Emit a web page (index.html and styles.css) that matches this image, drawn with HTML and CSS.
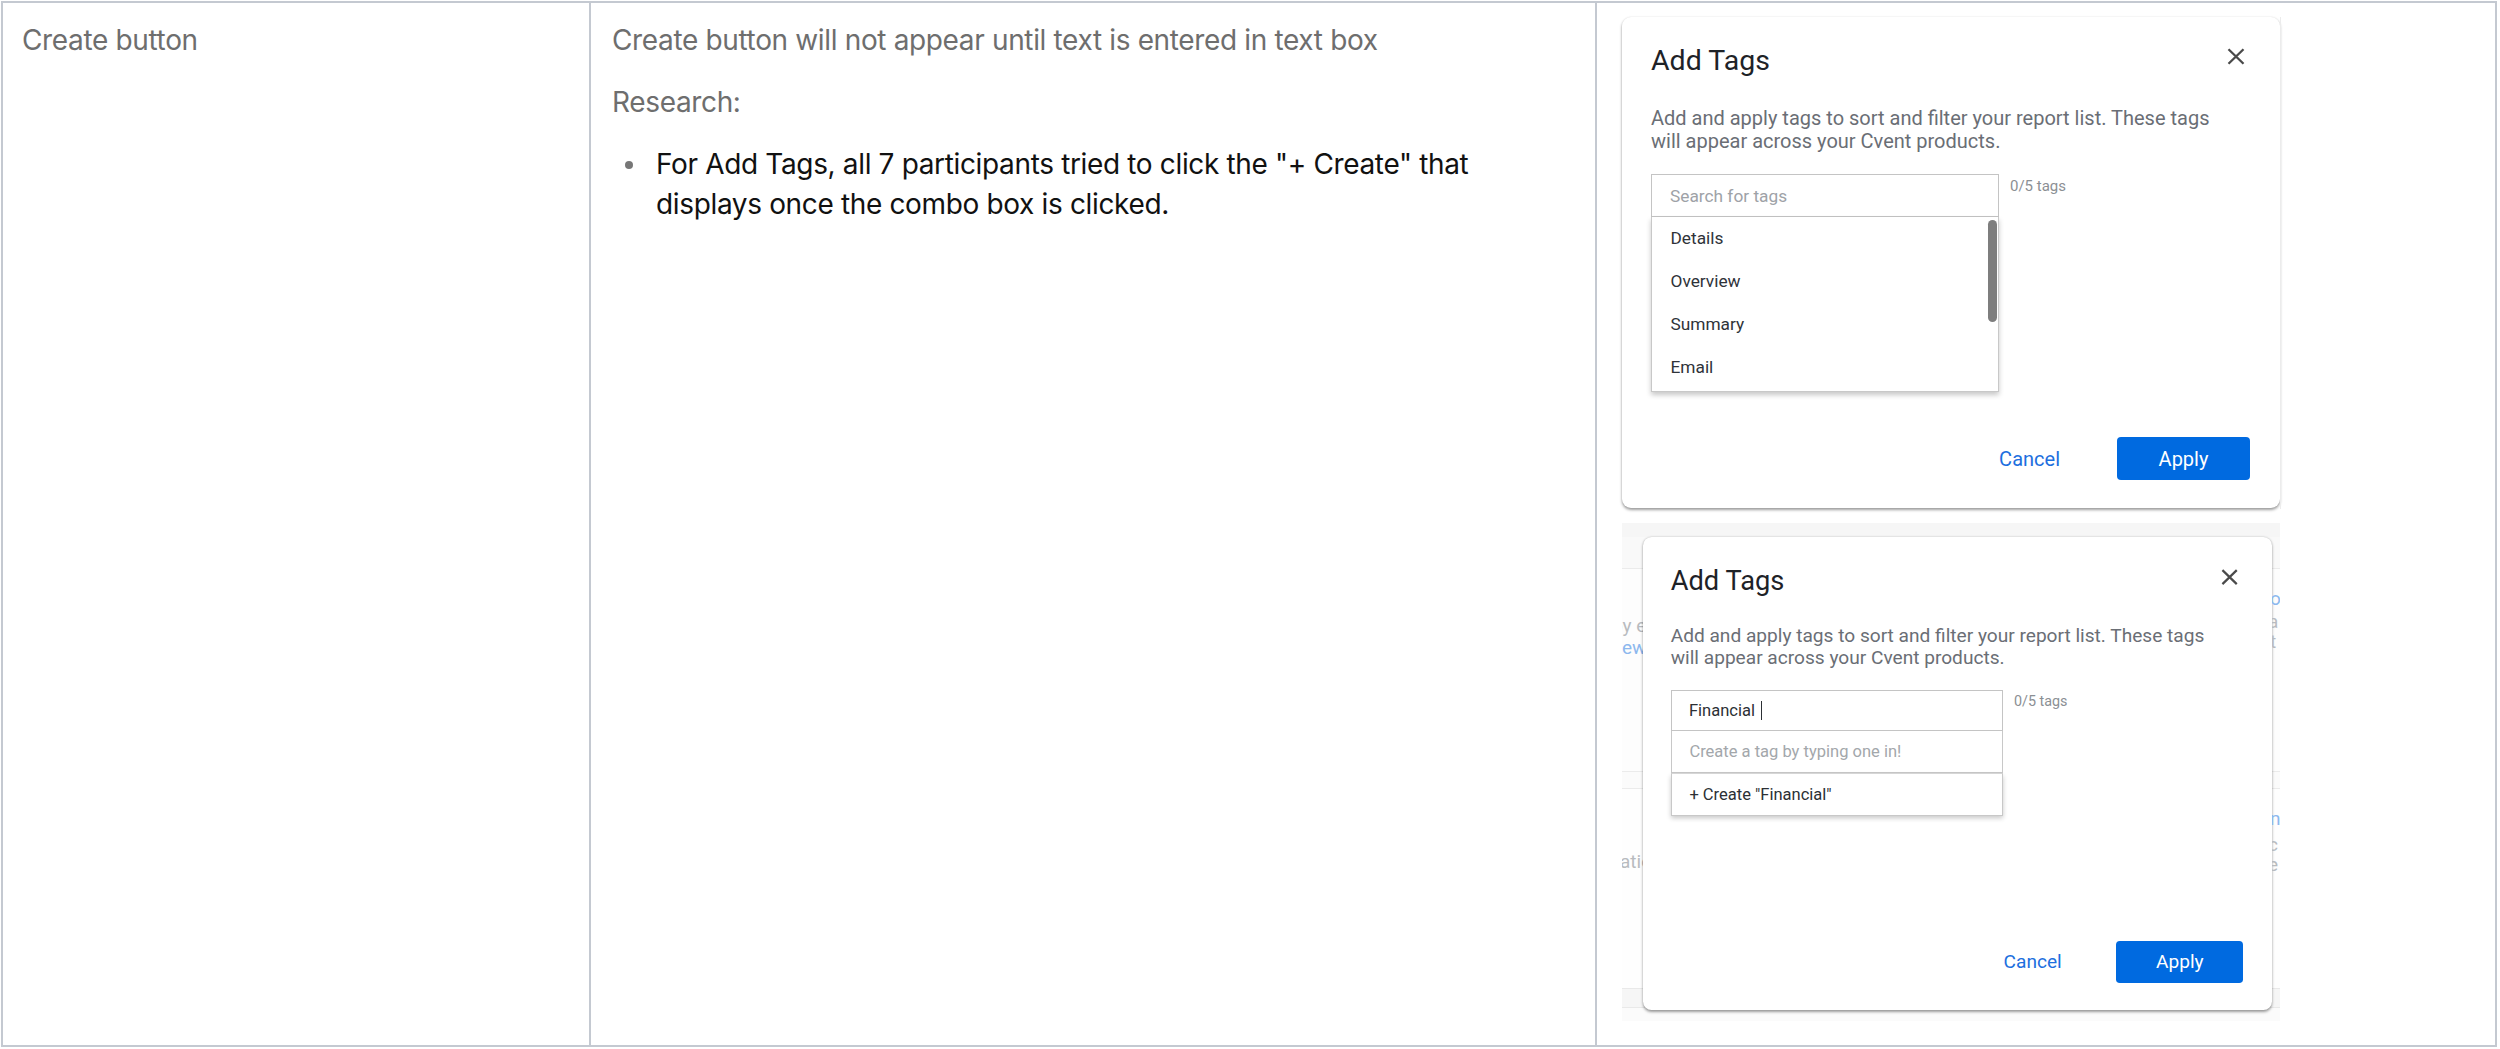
FILE: index.html
```html
<!DOCTYPE html>
<html lang="en">
<head>
<meta charset="utf-8">
<title>Create button</title>
<link rel="stylesheet" href="styles.css">
</head>
<body>
<div class="table">
  <div class="cell c1">
    <p class="para muted">Create button</p>
  </div>
  <div class="cell c2">
    <p class="para muted">Create button will not appear until text is entered in text box</p>
    <p class="para muted">Research:</p>
    <ul class="bullets">
      <li>For Add Tags, all 7 participants tried to click the "+ Create" that displays once the combo box is clicked.</li>
    </ul>
  </div>
  <div class="cell c3">
    <div class="shot shot1">
      <div class="dialog">
        <div class="dlg-head">
          <div class="dlg-title">Add Tags</div>
          <svg class="close" viewBox="0 0 18 17" width="18" height="17"><path d="M1.5 1.2 L16.5 15.8 M16.5 1.2 L1.5 15.8" stroke="#4a4a4a" stroke-width="2.3" fill="none"/></svg>
        </div>
        <div class="dlg-desc">Add and apply tags to sort and filter your report list. These tags<br>will appear across your Cvent products.</div>
        <div class="field-row">
          <div class="combo">
            <div class="input placeholder">Search for tags</div>
            <div class="list">
              <div class="item">Details</div>
              <div class="item">Overview</div>
              <div class="item">Summary</div>
              <div class="item">Email</div>
              <div class="scroll"></div>
            </div>
          </div>
          <div class="count">0/5 tags</div>
        </div>
        <div class="dlg-foot">
          <span class="cancel">Cancel</span>
          <span class="apply">Apply</span>
        </div>
      </div>
      <div class="edge-r"></div>
    </div>
    <div class="shot shot2">
      <div class="strip strip-l">
        <span class="ghost g1">by e</span>
        <span class="ghost g2 blue">ew</span>
        <span class="ghost g3">atio</span>
      </div>
      <div class="dialog small">
        <div class="dlg-head">
          <div class="dlg-title">Add Tags</div>
          <svg class="close" viewBox="0 0 18 17" width="18" height="17"><path d="M1.5 1.2 L16.5 15.8 M16.5 1.2 L1.5 15.8" stroke="#4a4a4a" stroke-width="2.3" fill="none"/></svg>
        </div>
        <div class="dlg-desc">Add and apply tags to sort and filter your report list. These tags<br>will appear across your Cvent products.</div>
        <div class="field-row">
          <div class="combo">
            <div class="input typed">Financial<span class="caret"></span></div>
            <div class="row hint">Create a tag by typing one in!</div>
            <div class="row create">+ Create "Financial"</div>
          </div>
          <div class="count">0/5 tags</div>
        </div>
        <div class="dlg-foot">
          <span class="cancel">Cancel</span>
          <span class="apply">Apply</span>
        </div>
      </div>
      <div class="strip strip-r">
        <span class="ghost r1 blue">o</span>
        <span class="ghost r2">a</span>
        <span class="ghost r3">t</span>
        <span class="ghost r4 blue">n</span>
        <span class="ghost r5">c</span>
        <span class="ghost r6">e</span>
      </div>
    </div>
  </div>
</div>
</body>
</html>
```

FILE: styles.css
```css
html, body {
  margin: 0;
  padding: 0;
  background: #ffffff;
}

body {
  font-family: Inter, "Liberation Sans", sans-serif;
}

.table {
  margin: 1px 0 0 1px;
  width: 2496px;
  height: 1046px;
  box-sizing: border-box;
  border: 2px solid #c4c9d1;
  display: grid;
  grid-template-columns: 588px 1006px 1fr;
}

.cell {
  box-sizing: border-box;
  padding: 17px 20px 0 20px;
}

.c1 {
  padding-left: 19px;
  border-right: 2px solid #c4c9d1;
}

.c2 {
  padding-left: 21px;
  border-right: 2px solid #c4c9d1;
}

.para {
  margin: 0 0 22px;
  font-size: 28px;
  line-height: 40px;
  letter-spacing: -0.35px;
}

.muted {
  color: #6e6e6e;
}

.bullets {
  margin: 0;
  padding: 0;
  list-style: none;
}

.bullets li {
  display: flex;
  font-size: 28px;
  line-height: 40px;
  letter-spacing: -0.35px;
  color: #111111;
}

.bullets li::before {
  content: "";
  flex: none;
  width: 8px;
  height: 8px;
  border-radius: 50%;
  background: #777777;
  margin: 17px 23px 0 13px;
}

.c3 {
  padding: 12px 0 0 23px;
}

/* screenshots */
.shot {
  display: flex;
  box-sizing: border-box;
}

.shot1 {
  width: 664px;
  height: 508px;
  padding: 2px 0 0 2px;
}

.edge-r {
  width: 4px;
  height: 492px;
  border-left: 1px solid #ececec;
  box-sizing: border-box;
}

.shot2 {
  margin-left: 2px;
  width: 658px;
  height: 498px;
  padding-top: 14px;
  background: linear-gradient(to bottom,
    #f6f6f6 0, #f6f6f6 14px,
    #f9f9f9 14px, #f9f9f9 45px,
    #ebebeb 45px, #ebebeb 46px,
    #fdfdfd 46px, #fdfdfd 248px,
    #ebebeb 248px, #ebebeb 249px,
    #fbfbfb 249px, #fbfbfb 265px,
    #ebebeb 265px, #ebebeb 266px,
    #fefefe 266px, #fefefe 465px,
    #e9e9e9 465px, #e9e9e9 466px,
    #f6f6f6 466px, #f6f6f6 484px,
    #e9e9e9 484px, #e9e9e9 485px,
    #fbfbfb 485px);
}

.strip {
  display: flex;
  flex-direction: column;
  overflow: hidden;
  flex: none;
  font-family: Roboto, sans-serif;
  font-size: 19px;
  line-height: 20px;
  color: #b8bbbf;
}

.strip-l {
  width: 21px;
}

.strip-r {
  width: 8px;
}

.ghost {
  white-space: nowrap;
}

.blue {
  color: #8cb8ee;
}

.g1 { margin: 79px 0 0 -10px; }
.g2 { margin: 2px 0 0 0; }
.g3 { margin: 194px 0 0 -2px; }

.r1 { margin: 52px 0 0 -2px; }
.r2 { margin: 3px 0 0 -4px; }
.r3 { margin: 0 0 0 -2px; }
.r4 { margin: 157px 0 0 -2px; }
.r5 { margin: 6px 0 0 -4px; }
.r6 { margin: 0 0 0 -4px; }

/* dialog */
.dialog {
  flex: none;
  width: 658px;
  height: 491px;
  box-sizing: border-box;
  background: #ffffff;
  border-radius: 9px;
  box-shadow: 0 2px 3px rgba(0, 0, 0, 0.38), 0 0 2px rgba(0, 0, 0, 0.10);
  display: flex;
  flex-direction: column;
  padding: 27px 30px 28px 29px;
  font-family: Roboto, "Liberation Sans", sans-serif;
}

.dialog.small {
  zoom: 0.956;
  height: 495px;
  padding-top: 29.5px;
  padding-bottom: 29px;
}

.dlg-head {
  display: flex;
  justify-content: space-between;
  align-items: flex-start;
}

.dlg-title {
  font-size: 28.5px;
  line-height: 34px;
  color: #1e2227;
}

.close {
  margin: 4px 5px 0 0;
}

.dlg-desc {
  margin-top: 29px;
  font-size: 20px;
  line-height: 23px;
  color: #6a6e75;
  white-space: nowrap;
}

.field-row {
  display: flex;
  gap: 11px;
  margin-top: 21px;
}

.small .field-row {
  margin-top: 22px;
}

.combo {
  width: 348px;
  flex: none;
}

.input {
  height: 43px;
  box-sizing: border-box;
  border: 1.5px solid #c4c4c4;
  display: flex;
  align-items: center;
  padding-left: 18px;
  font-size: 17.3px;
}

.placeholder {
  color: #9ea2a7;
}

.typed {
  color: #2c3035;
  height: 42px;
}

.caret {
  display: inline-block;
  width: 1.5px;
  height: 20px;
  background: #2c3035;
  margin-left: 6px;
}

.list {
  position: relative;
  height: 175px;
  box-sizing: border-box;
  border: 1.5px solid #c8c8c8;
  border-top: none;
  box-shadow: 0 3px 5px rgba(0, 0, 0, 0.22);
  padding-left: 18.5px;
}

.item {
  font-size: 17.3px;
  line-height: 43px;
  color: #2f3339;
}

.scroll {
  position: absolute;
  right: 1px;
  top: 3px;
  width: 9px;
  height: 102px;
  border-radius: 5px;
  background: #7e7e7e;
}

.row {
  box-sizing: border-box;
  border: 1.5px solid #c8c8c8;
  border-top: none;
  padding-left: 18.5px;
  font-size: 17.3px;
  display: flex;
  align-items: center;
}

.hint {
  height: 44px;
  color: #a3a7ab;
}

.create {
  height: 45px;
  color: #2c3035;
  box-shadow: 0 3px 5px rgba(0, 0, 0, 0.22);
  border-top: 1.5px solid #d6d6d6;
}

.count {
  margin-top: 2px;
  font-size: 15px;
  line-height: 20px;
  color: #8b8f94;
}

.dlg-foot {
  margin-top: auto;
  display: flex;
  justify-content: flex-end;
  align-items: center;
  gap: 57px;
}

.cancel {
  font-size: 20px;
  color: #1d6fde;
}

.apply {
  width: 133px;
  height: 43px;
  border-radius: 4px;
  background: #006ae0;
  color: #ffffff;
  font-size: 20px;
  display: flex;
  align-items: center;
  justify-content: center;
}
```
